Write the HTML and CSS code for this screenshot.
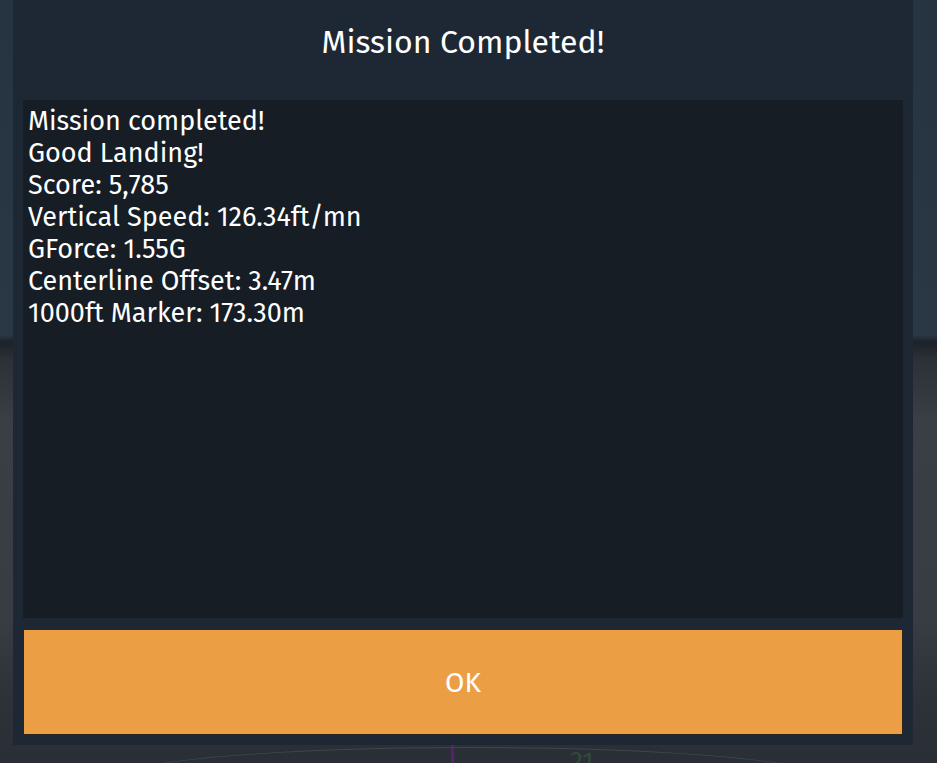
FILE: index.html
```html
<!DOCTYPE html>
<html lang="en">
<head>
    <meta charset="UTF-8">
    <meta name="viewport" content="width=device-width, initial-scale=1.0">
    <title>Mission Completed</title>
    <link rel="stylesheet" href="styles.css">
</head>
<body>
    <div class="scene">
        <div class="scene-line"></div>
        <div class="scene-ring"></div>
        <div class="scene-number">21</div>
    </div>
    <div class="dialog">
        <h2 class="dialog-title">Mission Completed!</h2>
        <div class="report">
            <div>Mission completed!</div>
            <div>Good Landing!</div>
            <div>Score: 5,785</div>
            <div>Vertical Speed: 126.34ft/mn</div>
            <div>GForce: 1.55G</div>
            <div>Centerline Offset: 3.47m</div>
            <div>1000ft Marker: 173.30m</div>
        </div>
        <button type="button" class="ok-button">OK</button>
    </div>
</body>
</html>
```

FILE: styles.css
```css
body {
    margin: 0;
    width: 937px;
    height: 763px;
    overflow: hidden;
    font-family: "Fira Sans", Roboto, "Liberation Sans", sans-serif;
    background: linear-gradient(to bottom,
        #263341 0px,
        #2a3846 335px,
        #1c2228 342px,
        #2b3136 360px,
        #3a3f45 420px,
        #383d43 620px,
        #2d3238 700px,
        #2a2f35 763px);
    position: relative;
}

/* bits of the game scene peeking out under the dialog */
.scene {
    position: absolute;
    left: 0;
    top: 745px;
    width: 937px;
    height: 18px;
    overflow: hidden;
}
.scene-line {
    position: absolute;
    left: 451px;
    top: 0;
    width: 3px;
    height: 18px;
    background-color: #5a1f6e;
}
.scene-ring {
    position: absolute;
    left: 120px;
    top: 2px;
    width: 700px;
    height: 60px;
    border: 1px solid #3f474c;
    border-radius: 50%;
}
.scene-number {
    position: absolute;
    left: 570px;
    top: 4px;
    font-size: 26px;
    line-height: 26px;
    color: #2f4a3c;
}

.dialog {
    margin-left: 13px;
    width: 880px;
    height: 735px;
    padding: 0 10px 10px;
    background-color: #1e2834;
    color: #ffffff;
    display: flex;
    flex-direction: column;
}
.dialog-title {
    margin: 0;
    height: 100px;
    padding-top: 23px;
    box-sizing: border-box;
    text-align: center;
    font-size: 32px;
    font-weight: normal;
    line-height: 38px;
}
.report {
    height: 518px;
    box-sizing: border-box;
    padding: 5px 5px;
    background-color: #161d25;
    font-size: 27px;
    line-height: 32px;
}
.ok-button {
    margin-top: 11px;
    height: 106px;
    border: 1px solid #2a2622;
    background-color: #eb9e43;
    color: #ffffff;
    font-family: inherit;
    font-size: 28px;
    cursor: pointer;
}
```
